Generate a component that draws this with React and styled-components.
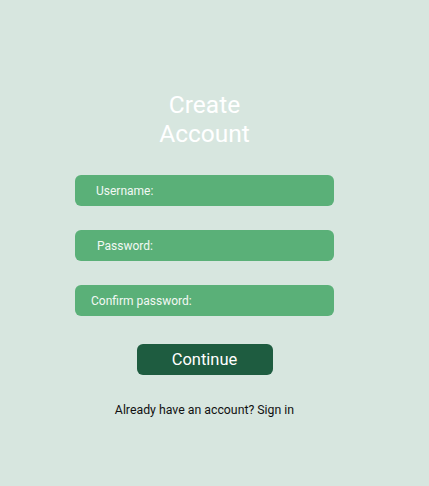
import React from 'react'
import styled, { createGlobalStyle } from 'styled-components'

const GlobalStyle = createGlobalStyle`
  * { box-sizing: border-box; }
  body {
    margin: 0;
    background: #d7e6df;
    font-family: Roboto, 'Liberation Sans', sans-serif;
  }
`

const Page = styled.main`
  width: 429px;
  height: 486px;
  background: #d7e6df;
  padding-top: 90px;
`

const Form = styled.form`
  width: 259px;
  margin-left: 75px;
  display: flex;
  flex-direction: column;
  align-items: center;
`

const Title = styled.h1`
  margin: 0 0 27px;
  width: 110px;
  text-align: center;
  font-size: 24.5px;
  font-weight: 400;
  line-height: 29px;
  color: #ffffff;
`

const Field = styled.label`
  width: 100%;
  height: 31px;
  border-radius: 6px;
  background: #5ab078;
  display: flex;
  align-items: center;
  padding-left: ${(p) => p.$indent}px;
  margin-bottom: 24px;
  color: #f2f8f4;
  font-size: 12px;
  cursor: text;
`

const FieldInput = styled.input`
  flex: 1;
  min-width: 0;
  border: none;
  background: transparent;
  outline: none;
  color: #fff;
  font: inherit;
  padding-left: 4px;
`

const Continue = styled.button`
  margin-top: 4px;
  width: 136px;
  height: 31px;
  border: none;
  border-radius: 6px;
  background: #1e5c40;
  color: #fff;
  font-family: inherit;
  font-size: 16.5px;
  cursor: pointer;
`

const Footer = styled.p`
  margin: 28px 0 0;
  font-size: 12.3px;
  color: #111;
`

const fields = [
  { label: 'Username:', indent: 21, type: 'text' },
  { label: 'Password:', indent: 22, type: 'password' },
  { label: 'Confirm password:', indent: 16, type: 'password' },
]

const App = () => {
  return <Page>
    <GlobalStyle />
    <Form onSubmit={(e) => e.preventDefault()}>
      <Title>Create Account</Title>
      {fields.map((f) => (
        <Field key={f.label} $indent={f.indent}>
          {f.label}
          <FieldInput type={f.type} />
        </Field>
      ))}
      <Continue type='submit'>Continue</Continue>
      <Footer>Already have an account? Sign in</Footer>
    </Form>
  </Page>
}

export default App
